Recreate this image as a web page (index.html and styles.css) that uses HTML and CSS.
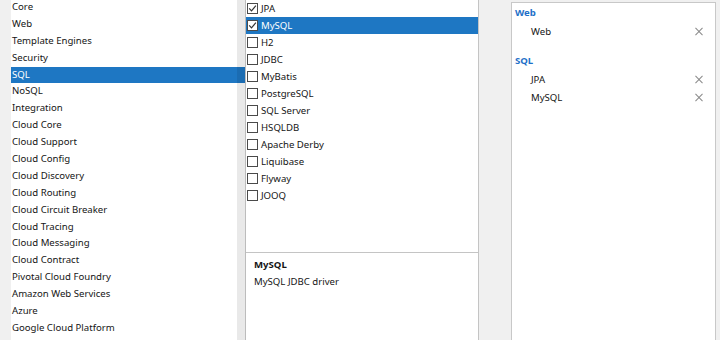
FILE: index.html
```html
<!DOCTYPE html>
<html>
<head>
    <title>Dependencies</title>
    <link rel="stylesheet" href="styles.css">
</head>
<body>

<div class="wizard">
    <div class="categories">
        <ul class="category-list">
            <li>Core</li>
            <li>Web</li>
            <li>Template Engines</li>
            <li>Security</li>
            <li class="selected">SQL</li>
            <li>NoSQL</li>
            <li>Integration</li>
            <li>Cloud Core</li>
            <li>Cloud Support</li>
            <li>Cloud Config</li>
            <li>Cloud Discovery</li>
            <li>Cloud Routing</li>
            <li>Cloud Circuit Breaker</li>
            <li>Cloud Tracing</li>
            <li>Cloud Messaging</li>
            <li>Cloud Contract</li>
            <li>Pivotal Cloud Foundry</li>
            <li>Amazon Web Services</li>
            <li>Azure</li>
            <li>Google Cloud Platform</li>
        </ul>
        <div class="track"></div>
    </div>

    <div class="options">
        <ul class="option-list">
            <li><span class="box checked"></span>JPA</li>
            <li class="selected"><span class="box checked"></span>MySQL</li>
            <li><span class="box"></span>H2</li>
            <li><span class="box"></span>JDBC</li>
            <li><span class="box"></span>MyBatis</li>
            <li><span class="box"></span>PostgreSQL</li>
            <li><span class="box"></span>SQL Server</li>
            <li><span class="box"></span>HSQLDB</li>
            <li><span class="box"></span>Apache Derby</li>
            <li><span class="box"></span>Liquibase</li>
            <li><span class="box"></span>Flyway</li>
            <li><span class="box"></span>JOOQ</li>
        </ul>
        <div class="description">
            <div class="desc-title">MySQL</div>
            <div class="desc-text">MySQL JDBC driver</div>
        </div>
    </div>

    <div class="chosen">
        <div class="group">
            <div class="group-name">Web</div>
            <div class="chosen-item"><span>Web</span><span class="remove"></span></div>
        </div>
        <div class="group">
            <div class="group-name">SQL</div>
            <div class="chosen-item"><span>JPA</span><span class="remove"></span></div>
            <div class="chosen-item"><span>MySQL</span><span class="remove"></span></div>
        </div>
    </div>
</div>

</body>
</html>
```

FILE: styles.css
```css
html, body {
    margin: 0;
    height: 100%;
}

body {
    background-color: #f0f0f0;
    color: #151515;
    font-family: "Noto Sans", "Noto Sans CJK SC", sans-serif;
    font-size: 9.6px;
    overflow: hidden;
}

ul {
    list-style: none;
    margin: 0;
    padding: 0;
}

.wizard {
    display: flex;
    height: 340px;
    padding-left: 11px;
}

.categories {
    position: relative;
    width: 234px;
    background-color: white;
}

.category-list {
    margin-top: -1px;
}

.category-list li {
    height: 16.9px;
    line-height: 16.9px;
    padding-left: 1px;
    white-space: nowrap;
}

.selected {
    background-color: #1e77c3;
    color: white;
}

/* scroll track drawn over the right edge of the list */
.track {
    position: absolute;
    top: 0;
    right: 0;
    bottom: 0;
    width: 8px;
    background-color: rgba(0, 0, 0, 0.085);
}

.options {
    width: 232px;
    display: flex;
    flex-direction: column;
    background-color: white;
    border-left: 1px solid #bcbcbc;
    border-right: 1px solid #c4c4c4;
}

.option-list {
    height: 252px;
    border-bottom: 1px solid #c4c4c4;
}

.option-list li {
    display: flex;
    align-items: center;
    height: 17px;
    white-space: nowrap;
}

.box {
    width: 9px;
    height: 9px;
    margin-left: 1px;
    margin-right: 3px;
    border: 1px solid #4a4a4a;
    background-color: white;
    flex-shrink: 0;
}

.box.checked {
    background-image: url("data:image/svg+xml,%3Csvg xmlns='http://www.w3.org/2000/svg' width='9' height='9' viewBox='0 0 9 9'%3E%3Cpath d='M1.2 4.4 L3.5 6.8 L7.9 1.6' fill='none' stroke='%23333' stroke-width='1.2'/%3E%3C/svg%3E");
}

.description {
    padding: 3px 8px;
}

.desc-title {
    font-weight: bold;
    line-height: 17px;
}

.desc-text {
    line-height: 17px;
}

.chosen {
    width: 203px;
    margin-top: 2px;
    margin-left: 32px;
    background-color: white;
    border: 1px solid #c8c8c8;
    border-bottom: none;
}

.group + .group {
    margin-top: 10px;
}

.group-name {
    height: 19px;
    line-height: 19px;
    padding-left: 3px;
    font-weight: bold;
    color: #1f70c8;
}

.chosen-item {
    display: flex;
    justify-content: space-between;
    align-items: center;
    height: 19px;
    padding-left: 19px;
    padding-right: 12px;
}

.chosen-item + .chosen-item {
    margin-top: -1px;
}

.remove {
    position: relative;
    width: 8px;
    height: 8px;
}

.remove::before, .remove::after {
    content: "";
    position: absolute;
    left: -1px;
    top: 3.5px;
    width: 10px;
    height: 1px;
    background-color: #8a8a8a;
    transform: rotate(45deg);
}

.remove::after {
    transform: rotate(-45deg);
}
```
